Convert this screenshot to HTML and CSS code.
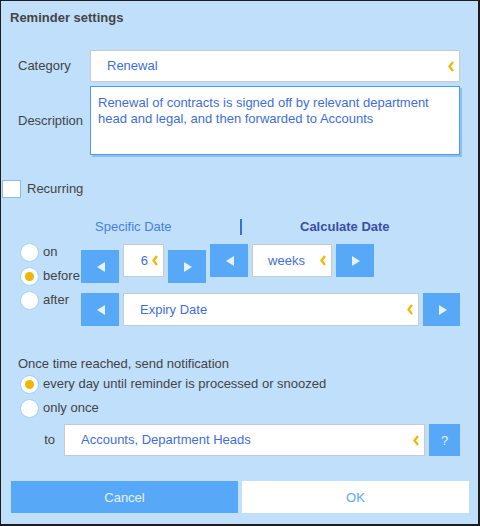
FILE: index.html
```html
<!DOCTYPE html><html>
<head>
  <meta name="viewport" content="width=device-width, initial-scale=1.0">
  <title>Reminder settings</title>
  <link rel="stylesheet" href="styles.css">
</head><body>

<div class="dialog">
  <h1 class="title">Reminder settings</h1>

  <div class="fields">
    <label class="field-label">Category</label>
    <div class="select">
      <span class="value">Renewal</span>
      <svg class="chev" viewBox="0 0 6 11"><polyline points="5,1 1.5,5.5 5,10"/></svg>
    </div>
    <label class="field-label">Description</label>
    <div class="textarea">Renewal of contracts is signed off by relevant department head and legal, and then forwarded to Accounts</div>
  </div>

  <label class="check-row"><span class="checkbox"></span>Recurring</label>

  <div class="tabs">
    <span class="tab">Specific Date</span>
    <span class="sep"></span>
    <span class="tab active">Calculate Date</span>
  </div>

  <div class="when">
    <div class="radios">
      <label class="radio-row"><span class="radio"></span>on</label>
      <label class="radio-row"><span class="radio checked"></span>before</label>
      <label class="radio-row"><span class="radio"></span>after</label>
    </div>
    <div class="controls">
      <div class="ctl-row">
        <button class="arrow low"><span class="tri left"></span></button>
        <div class="select num">
          <span class="value">6</span>
          <svg class="chev" viewBox="0 0 6 11"><polyline points="5,1 1.5,5.5 5,10"/></svg>
        </div>
        <button class="arrow low"><span class="tri right"></span></button>
        <button class="arrow"><span class="tri left"></span></button>
        <div class="select unit">
          <span class="value">weeks</span>
          <svg class="chev" viewBox="0 0 6 11"><polyline points="5,1 1.5,5.5 5,10"/></svg>
        </div>
        <button class="arrow"><span class="tri right"></span></button>
      </div>
      <div class="ctl-row second">
        <button class="arrow"><span class="tri left"></span></button>
        <div class="select ref">
          <span class="value">Expiry Date</span>
          <svg class="chev" viewBox="0 0 6 11"><polyline points="5,1 1.5,5.5 5,10"/></svg>
        </div>
        <button class="arrow"><span class="tri right"></span></button>
      </div>
    </div>
  </div>

  <p class="notify-title">Once time reached, send notification</p>
  <div class="radios notify">
    <label class="radio-row"><span class="radio checked"></span>every day until reminder is processed or snoozed</label>
    <label class="radio-row"><span class="radio"></span>only once</label>
  </div>

  <div class="to-row">
    <label class="to-label">to</label>
    <div class="select recipients">
      <span class="value">Accounts, Department Heads</span>
      <svg class="chev" viewBox="0 0 6 11"><polyline points="5,1 1.5,5.5 5,10"/></svg>
    </div>
    <button class="help">?</button>
  </div>

  <div class="actions">
    <button class="btn cancel">Cancel</button>
    <button class="btn ok">OK</button>
  </div>
</div>

</body></html>
```

FILE: styles.css
```css
* { box-sizing: border-box; }
html, body { margin: 0; padding: 0; }
body {
  font-family: Arial, "Liberation Sans", sans-serif;
  font-size: 13px;
  line-height: 16px;
  color: #444;
  background: #fff;
}
.dialog {
  width: 480px;
  height: 526px;
  background: #bfdffb;
  border-style: solid;
  border-color: #1c1c1c;
  border-width: 1px 2px 2px 1px;
}
.title { margin: 0; padding: 9px 0 0 9px; font-size: 13px; line-height: 16px; font-weight: bold; color: #454545; }

/* category + description */
.fields {
  display: grid;
  grid-template-columns: 72px 370px;
  row-gap: 4px;
  margin-top: 24px;
  padding-left: 17px;
  align-items: center;
}
.field-label { color: #444; }
.select {
  display: flex;
  align-items: center;
  height: 33px;
  padding: 0 5px 0 16px;
  background: #fff;
  border: 1px solid #c6cbd0;
  color: #3f6edb;
}
.fields .select { height: 32px; }
.select .value { flex: 1; white-space: nowrap; overflow: hidden; }
.chev { width: 6px; height: 11px; flex: none; }
.chev polyline { fill: none; stroke: #f2b600; stroke-width: 2.2; }
.textarea {
  height: 69px;
  padding: 8px 7px;
  background: #fff;
  border: 1px solid #4b9bf3;
  box-shadow: 2px 2px 0 rgba(75, 155, 243, .45);
  color: #3f6edb;
}

/* recurring */
.check-row { display: flex; align-items: center; margin: 25px 0 0 1px; height: 18px; line-height: 18px; }
.checkbox { width: 19px; height: 18px; margin-right: 6px; background: #fff; border: 1px solid #86bcef; }

/* tabs */
.tabs {
  display: grid;
  grid-template-columns: 145px 2px auto;
  align-items: center;
  margin-top: 21px;
  padding-left: 94px;
  height: 16px;
}
.tab { color: #4c7fd9; }
.tab.active { padding-left: 58px; font-weight: bold; color: #3a4fa6; }
.sep { height: 16px; background: #3b6fd2; }

/* date controls */
.when { display: flex; margin-top: 5px; }
.radios { width: 61px; margin-left: 19px; }
.radio-row { display: flex; align-items: center; height: 24px; white-space: nowrap; }
.radio {
  display: flex;
  align-items: center;
  justify-content: center;
  width: 19px;
  height: 19px;
  margin-right: 4px;
  border-radius: 50%;
  background: #fff;
  border: 1px solid #a6cff4;
}
.radio.checked::after { content: ""; width: 9px; height: 9px; border-radius: 50%; background: #f2b600; }
.controls { margin-top: 4px; }
.ctl-row { display: flex; align-items: flex-start; gap: 4px; }
.ctl-row.second { margin-top: 10px; }
.arrow {
  display: flex;
  align-items: center;
  justify-content: center;
  width: 38px;
  height: 33px;
  padding: 0;
  border: 0;
  background: #58a8f8;
}
.arrow.low { margin-top: 6px; }
.tri { width: 0; height: 0; border-top: 5px solid transparent; border-bottom: 5px solid transparent; }
.tri.left { border-right: 8px solid #e6f1fd; margin-left: 1px; }
.tri.right { border-left: 8px solid #e6f1fd; margin-left: 2px; }
.select.num { width: 41px; padding: 0 5px 0 0; }
.select.num .value { text-align: right; padding-right: 4px; }
.select.unit { width: 80px; padding: 0 5px 0 0; }
.select.unit .value { text-align: center; }
.select.ref { width: 296px; }
.ctl-row.second .arrow:last-child { width: 37px; }

/* notification */
.notify-title { margin: 30px 0 0 17px; }
.radios.notify { width: auto; }
.to-row { display: flex; align-items: center; gap: 4px; margin-top: 4px; }
.to-label { width: 59px; text-align: right; padding-right: 5px; }
.select.recipients { width: 361px; height: 32px; }
.help {
  width: 31px;
  height: 32px;
  padding: 0;
  border: 0;
  background: #58a8f8;
  color: #e6f1fd;
  font-family: inherit;
  font-size: 13px;
}

/* buttons */
.actions { display: flex; gap: 4px; margin: 25px 0 0 10px; }
.btn {
  width: 227px;
  height: 32px;
  padding: 0;
  border: 0;
  font-family: inherit;
  font-size: 13px;
}
.btn.cancel { background: #58a8f8; color: #e6f1fd; }
.btn.ok { background: #fff; color: #58a8f8; }
```
